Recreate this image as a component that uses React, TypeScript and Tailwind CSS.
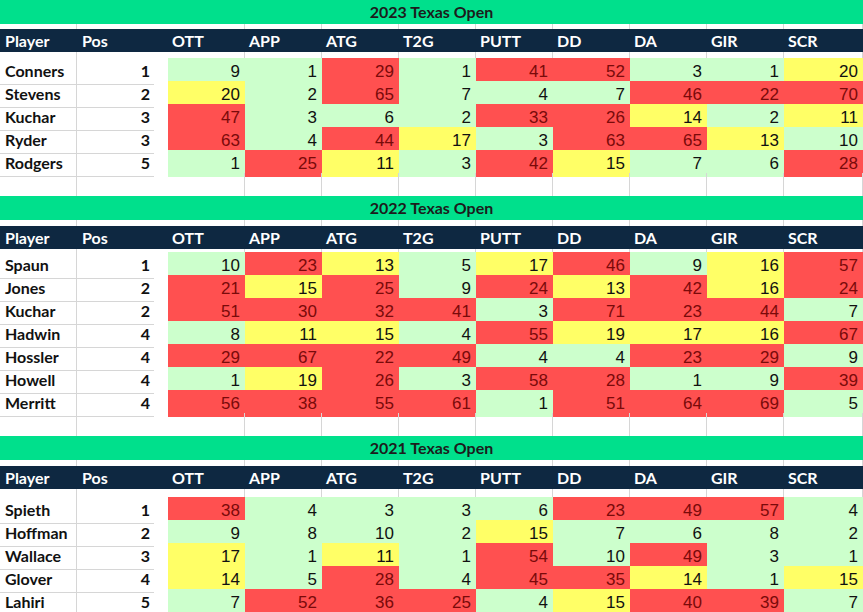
import React from "react"

type Row = { name: string; pos: number; stats: number[] }
type Section = { title: string; gapTop: number; gapAfterHeader: number; rows: Row[]; trailing: boolean }

const headers = ["OTT", "APP", "ATG", "T2G", "PUTT", "DD", "DA", "GIR", "SCR"]

const sections: Section[] = [
  {
    title: "2023 Texas Open",
    gapTop: 5,
    gapAfterHeader: 6,
    trailing: true,
    rows: [
      { name: "Conners", pos: 1, stats: [9, 1, 29, 1, 41, 52, 3, 1, 20] },
      { name: "Stevens", pos: 2, stats: [20, 2, 65, 7, 4, 7, 46, 22, 70] },
      { name: "Kuchar", pos: 3, stats: [47, 3, 6, 2, 33, 26, 14, 2, 11] },
      { name: "Ryder", pos: 3, stats: [63, 4, 44, 17, 3, 63, 65, 13, 10] },
      { name: "Rodgers", pos: 5, stats: [1, 25, 11, 3, 42, 15, 7, 6, 28] },
    ],
  },
  {
    title: "2022 Texas Open",
    gapTop: 6,
    gapAfterHeader: 3,
    trailing: true,
    rows: [
      { name: "Spaun", pos: 1, stats: [10, 23, 13, 5, 17, 46, 9, 16, 57] },
      { name: "Jones", pos: 2, stats: [21, 15, 25, 9, 24, 13, 42, 16, 24] },
      { name: "Kuchar", pos: 2, stats: [51, 30, 32, 41, 3, 71, 23, 44, 7] },
      { name: "Hadwin", pos: 4, stats: [8, 11, 15, 4, 55, 19, 17, 16, 67] },
      { name: "Hossler", pos: 4, stats: [29, 67, 22, 49, 4, 4, 23, 29, 9] },
      { name: "Howell", pos: 4, stats: [1, 19, 26, 3, 58, 28, 1, 9, 39] },
      { name: "Merritt", pos: 4, stats: [56, 38, 55, 61, 1, 51, 64, 69, 5] },
    ],
  },
  {
    title: "2021 Texas Open",
    gapTop: 6,
    gapAfterHeader: 8,
    trailing: false,
    rows: [
      { name: "Spieth", pos: 1, stats: [38, 4, 3, 3, 6, 23, 49, 57, 4] },
      { name: "Hoffman", pos: 2, stats: [9, 8, 10, 2, 15, 7, 6, 8, 2] },
      { name: "Wallace", pos: 3, stats: [17, 1, 11, 1, 54, 10, 49, 3, 1] },
      { name: "Glover", pos: 4, stats: [14, 5, 28, 4, 45, 35, 14, 1, 15] },
      { name: "Lahiri", pos: 5, stats: [7, 52, 36, 25, 4, 15, 40, 39, 7] },
    ],
  },
]

const gridCols = "grid grid-cols-[77px_77px_14px_repeat(8,77px)_1fr]"
const bold = "font-['Lato','Liberation_Sans',sans-serif] font-bold"
const num = "font-['Liberation_Sans',Arial,sans-serif]"

function cellColor(v: number) {
  if (v <= 10) return "bg-[#ccffcc] text-[#111]"
  if (v <= 20) return "bg-[#ffff66] text-[#111]"
  return "bg-[#ff5050] text-[#7a0a0a]"
}

function BlankRow({ h }: { h: number }) {
  return (
    <div className={gridCols} style={{ height: h }}>
      <div className="border-r border-[#d6d6d6]" />
      <div className="col-span-3 border-r border-[#d6d6d6]" />
      {headers.slice(1).map((x) => (
        <div key={x} className="border-r border-[#d6d6d6]" />
      ))}
    </div>
  )
}

function TableSection({ s }: { s: Section }) {
  return (
    <div>
      <div className={`flex h-[24px] items-center justify-center bg-[#00e08c] text-[16px] text-[#1c1c1c] ${bold}`}>
        {s.title}
      </div>
      <BlankRow h={s.gapTop} />
      <div className={`${gridCols} h-[23px] bg-[#0e2841] text-[16px] text-white ${bold}`}>
        <div className="flex items-center pl-[5px]">Player</div>
        <div className="flex items-center pl-[5px]">Pos</div>
        <div />
        {headers.map((h) => (
          <div key={h} className="flex items-center pl-[4px]">
            {h}
          </div>
        ))}
      </div>
      <BlankRow h={s.gapAfterHeader} />
      {s.rows.map((r) => (
        <div key={r.name} className={`${gridCols} h-[23px]`}>
          <div className={`flex items-center border-r border-b border-[#d6d6d6] pl-[5px] pt-[1px] text-[16px] text-[#111] ${bold}`}>
            {r.name}
          </div>
          <div className={`flex items-center justify-end border-b border-[#d6d6d6] pr-[4px] pt-[1px] text-[16px] text-[#111] ${bold}`}>
            {r.pos}
          </div>
          <div />
          {r.stats.map((v, i) => (
            <div
              key={i}
              className={`flex items-center justify-end pr-[5px] pt-[1px] text-[17px] ${num} ${cellColor(v)}`}
            >
              {v}
            </div>
          ))}
        </div>
      ))}
      {s.trailing && <BlankRow h={23} />}
    </div>
  )
}

export default function App() {
  return (
    <div className="h-[612px] w-[863px] overflow-hidden bg-white">
      {sections.map((s) => (
        <TableSection key={s.title} s={s} />
      ))}
    </div>
  )
}
